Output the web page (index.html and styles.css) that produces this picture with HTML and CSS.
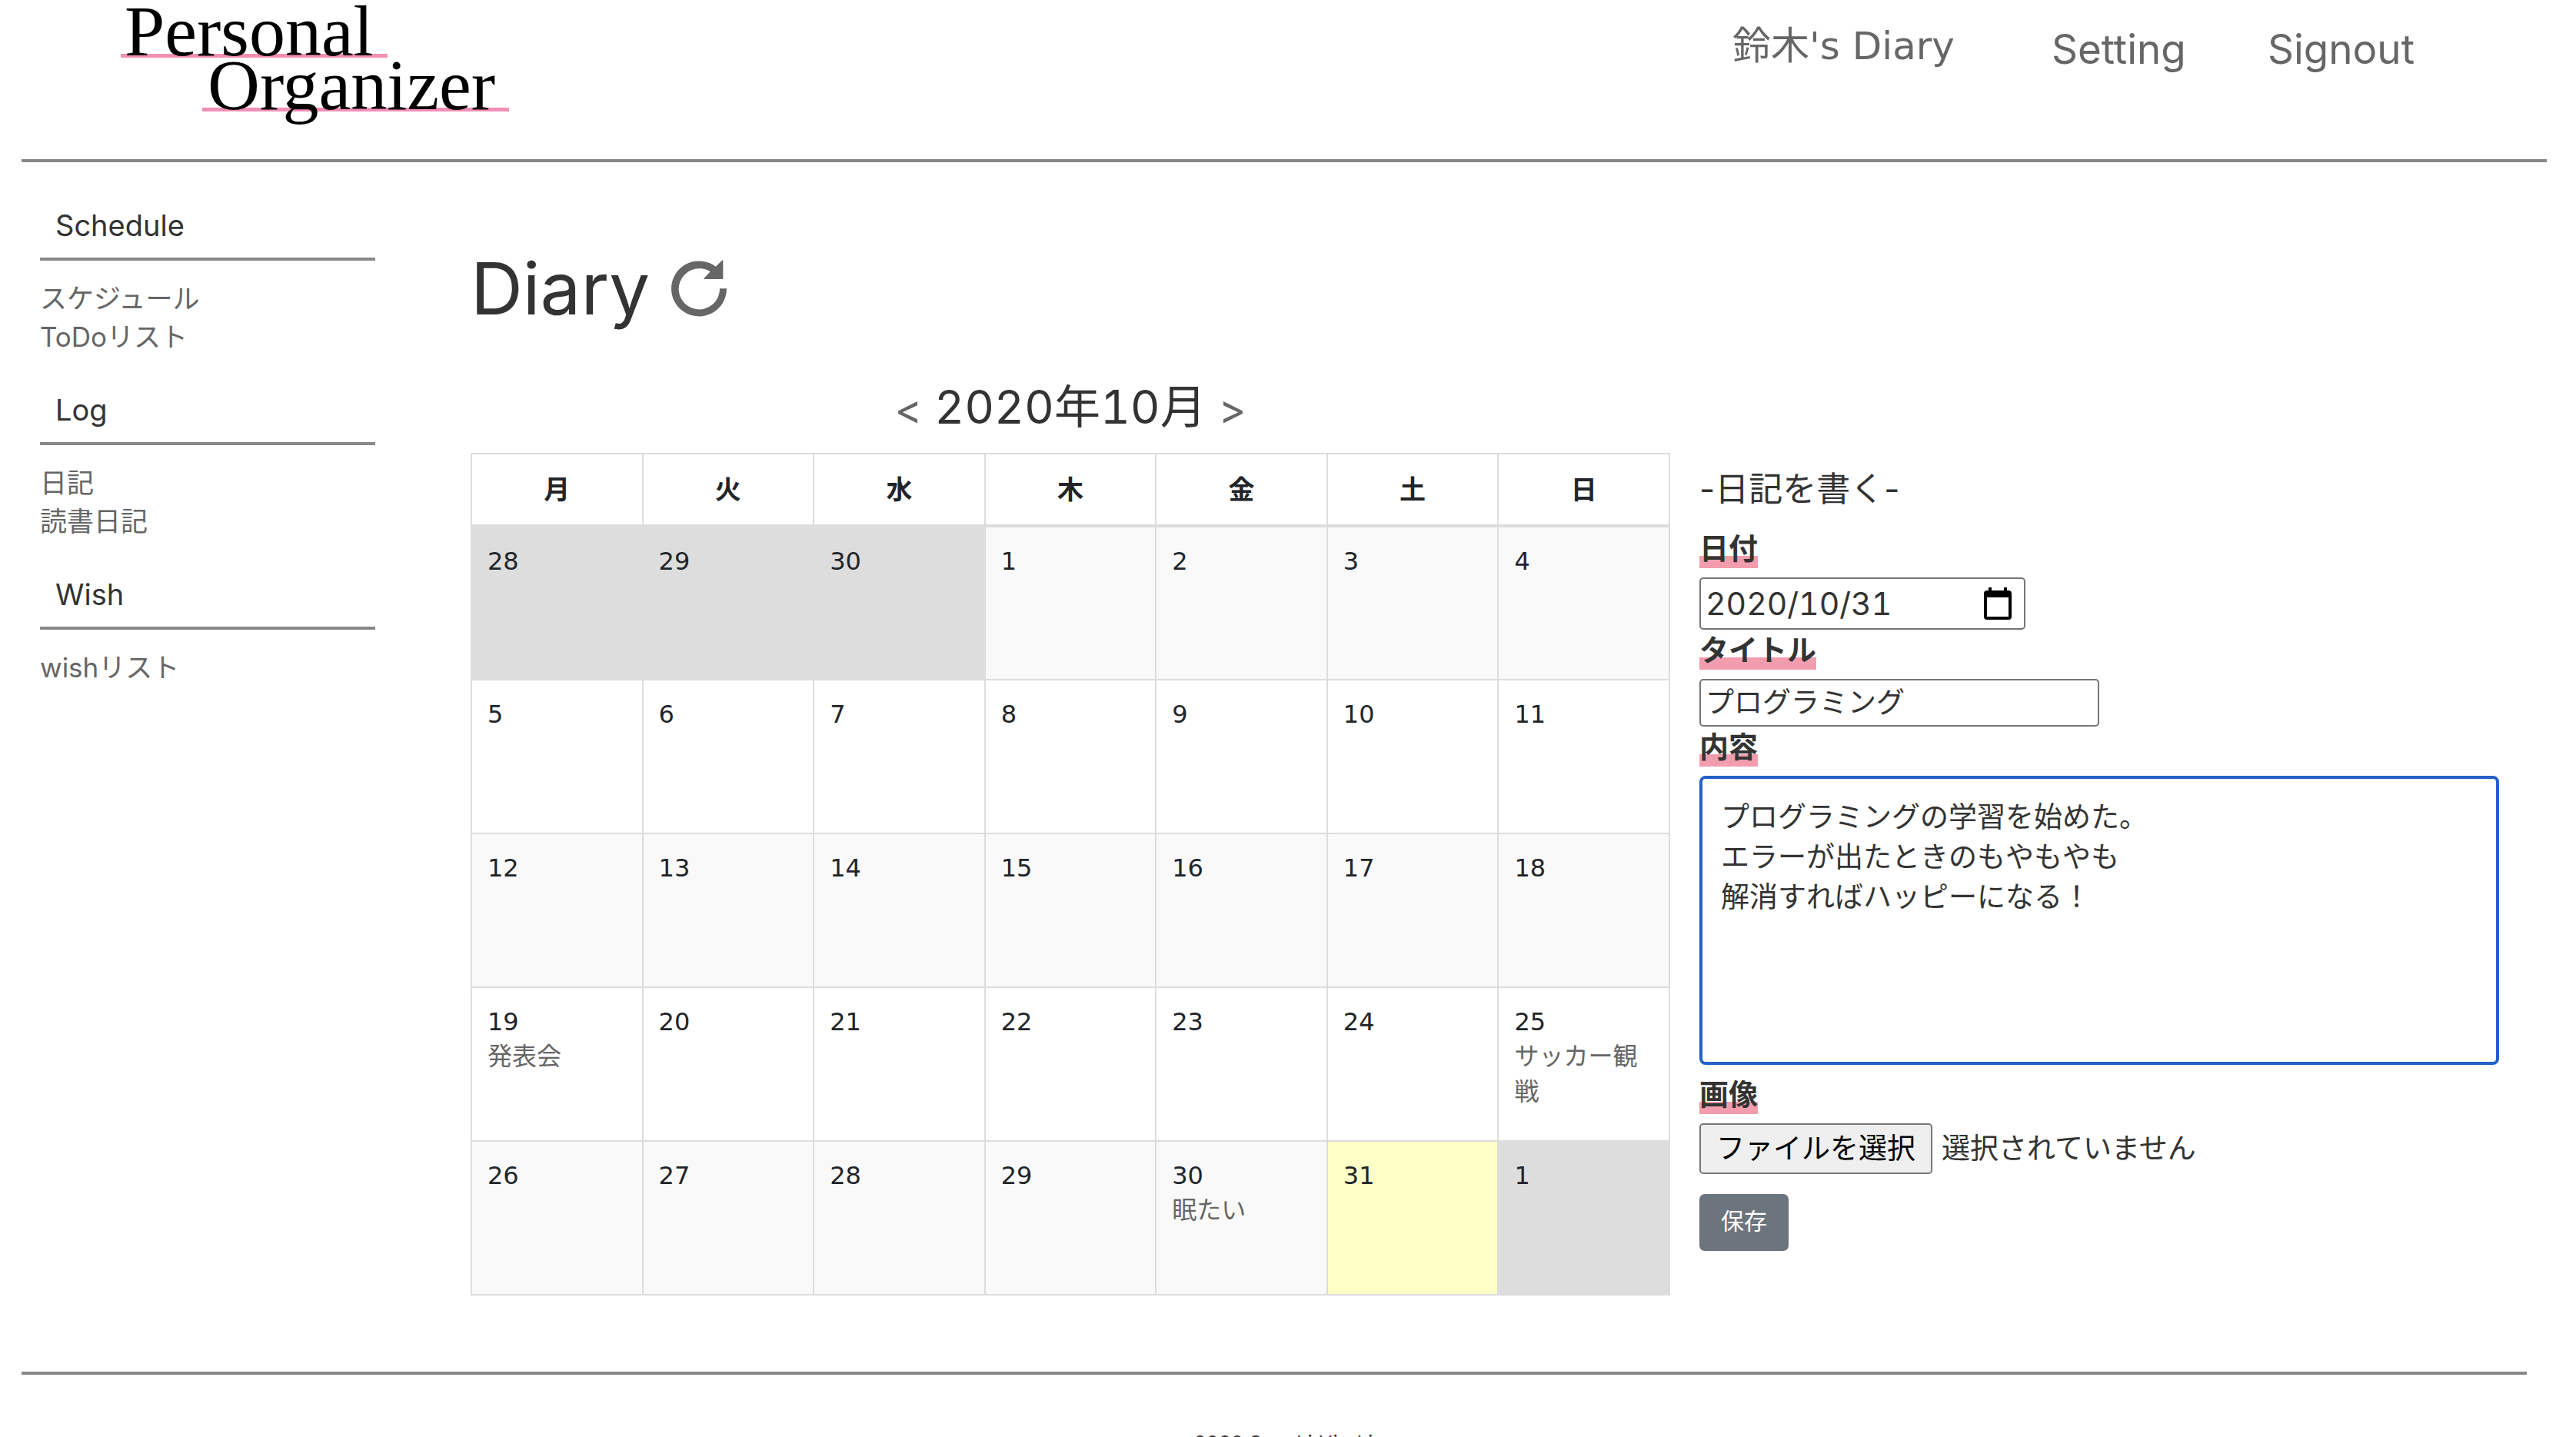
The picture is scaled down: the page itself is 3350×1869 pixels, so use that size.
FILE: index.html
```html
<!DOCTYPE html>
<html lang="ja">
<head>
<meta charset="utf-8">
<title>Personal Organizer</title>
<link rel="stylesheet" href="styles.css">
</head>
<body>
<header class="header">
  <a class="logo" href="#"><span class="logo-top">Personal</span><span class="logo-bottom">Organizer</span></a>
  <nav class="nav">
    <a class="nav-user" href="#">鈴木's Diary</a>
    <a href="#">Setting</a>
    <a href="#">Signout</a>
  </nav>
</header>

<div class="body">
  <aside class="sidebar">
    <section class="menu">
      <h2>Schedule</h2>
      <ul><li><a href="#">スケジュール</a></li><li><a href="#">ToDoリスト</a></li></ul>
    </section>
    <section class="menu">
      <h2>Log</h2>
      <ul><li><a href="#">日記</a></li><li><a href="#">読書日記</a></li></ul>
    </section>
    <section class="menu">
      <h2>Wish</h2>
      <ul><li><a href="#">wishリスト</a></li></ul>
    </section>
  </aside>

  <main class="main">
    <h1 class="title">Diary
      <a href="#" aria-label="更新"><svg class="reload" viewBox="42 53 216 222"><path d="M258 165A108 108 0 1 1 215 79L240 55Q244 52 244 57V124Q244 128 240 128H171Q166 128 170 124L194 99A80 80 0 1 0 231 165Z"/></svg></a>
    </h1>
    <div class="columns">
      <section class="calendar">
        <div class="month"><a href="#">&lt;</a><h2>2020年10月</h2><a href="#">&gt;</a></div>
        <table>
          <thead><tr><th>月</th><th>火</th><th>水</th><th>木</th><th>金</th><th>土</th><th>日</th></tr></thead>
          <tbody>
            <tr><td class="other">28</td><td class="other">29</td><td class="other">30</td><td>1</td><td>2</td><td>3</td><td>4</td></tr>
            <tr><td>5</td><td>6</td><td>7</td><td>8</td><td>9</td><td>10</td><td>11</td></tr>
            <tr><td>12</td><td>13</td><td>14</td><td>15</td><td>16</td><td>17</td><td>18</td></tr>
            <tr><td>19<a href="#">発表会</a></td><td>20</td><td>21</td><td>22</td><td>23</td><td>24</td><td>25<a href="#">サッカー観戦</a></td></tr>
            <tr><td>26</td><td>27</td><td>28</td><td>29</td><td>30<a href="#">眠たい</a></td><td class="today">31</td><td class="other">1</td></tr>
          </tbody>
        </table>
      </section>

      <form class="entry">
        <h2>-日記を書く-</h2>
        <label class="caption" for="date">日付</label>
        <div class="date-box">
          <input id="date" type="text" value="2020/10/31">
          <button type="button" aria-label="カレンダー"><svg viewBox="0 0 36 42"><path fill-rule="evenodd" d="M6 0h4v4h16V0h4v4h2a4 4 0 0 1 4 4v30a4 4 0 0 1-4 4H4a4 4 0 0 1-4-4V8a4 4 0 0 1 4-4h2zM4 13v25h28V13z"/></svg></button>
        </div>
        <label class="caption" for="subject">タイトル</label>
        <input id="subject" class="subject" type="text" value="プログラミング">
        <label class="caption" for="content">内容</label>
        <textarea id="content">プログラミングの学習を始めた。
エラーが出たときのもやもやも
解消すればハッピーになる！</textarea>
        <label class="caption caption-image" for="image">画像</label>
        <div class="file">
          <input id="image" type="file">
          <label class="file-button" for="image">ファイルを選択</label>
          <span>選択されていません</span>
        </div>
        <button class="save" type="submit">保存</button>
      </form>
    </div>
  </main>
</div>

<footer class="footer">2020 Suzuki Hiroki</footer>
</body>
</html>
```
FILE: styles.css
```css
* { box-sizing: border-box; }
body {
  margin: 0;
  background: #fff;
  color: #333;
  font-family: Inter, "Noto Sans CJK JP", sans-serif;
}
h1, h2, ul { margin: 0; padding: 0; font-weight: 400; }
ul { list-style: none; }
a { color: #666; text-decoration: none; }
input, textarea, button { font: inherit; color: inherit; margin: 0; }

.header {
  display: flex;
  justify-content: space-between;
  margin: 0 38px 0 28px;
  padding: 5px 172px 62px 129px;
  border-bottom: 4px solid #888;
}
.logo {
  color: #000;
  font: 94px/70px "Liberation Serif", serif;
}
.logo span {
  display: block;
  width: fit-content;
  padding: 0 18px 0 5px;
  background: linear-gradient(#f18fb5, #f18fb5) bottom / 100% 5px no-repeat;
}
.logo .logo-bottom { margin-left: 106px; padding-left: 7px; }
.nav {
  display: flex;
  gap: 106px;
  padding-top: 24px;
  font-size: 53px;
  line-height: 70px;
}
.nav-user {
  margin: -4px 20px 0 0;
  font-family: "DejaVu Sans", "Noto Sans CJK JP", sans-serif;
  font-size: 50px;
}

.body { display: flex; gap: 124px; padding: 0 100px 0 52px; }
.sidebar { flex: 0 0 436px; padding-top: 52px; }
.menu { margin-bottom: 40px; }
.menu h2 {
  padding: 0 20px 12px;
  border-bottom: 4px solid #888;
  font-size: 38px;
  line-height: 60px;
}
.menu ul { padding-top: 24px; font-size: 35px; line-height: 50px; }

.main { flex: 1; padding-top: 108px; }
.title {
  display: flex;
  align-items: center;
  gap: 28px;
  font-size: 94px;
  line-height: 112px;
}
.title a { display: flex; }
.reload { width: 72px; height: 74px; fill: #666; }
.columns {
  display: grid;
  grid-template-columns: 3fr 2fr;
  gap: 38px;
  padding-top: 62px;
}
.month {
  display: flex;
  justify-content: center;
  gap: 16px;
  margin-bottom: 24px;
  font-size: 54px;
  line-height: 74px;
}
.month h2 { font-size: 60px; line-height: 72px; font-variant-numeric: tabular-nums; }
.month { height: 72px; }
.month a { padding-top: 3px; }

table {
  width: 100%;
  border-collapse: collapse;
  table-layout: fixed;
  color: #212529;
  font: 32px/44px "DejaVu Sans", "Noto Sans CJK JP", sans-serif;
}
th, td { border: 2px solid #ddd; }
th { height: 94px; border-bottom-width: 4px; padding: 0; font-size: 34px; font-weight: 700; }
td { height: 200px; padding: 22px 20px 0; vertical-align: top; }
td a { display: block; line-height: 46px; }
tbody tr:nth-child(odd) { background: #f9f9f9; }
td.other { background: #ddd; }
td.today { background: #ffffc8; }

.entry {
  display: flex;
  flex-direction: column;
  align-items: flex-start;
  padding-top: 116px;
  font-size: 37px;
  line-height: 52px;
}
.entry h2 { margin-bottom: 24px; font-size: 44px; line-height: 54px; }
.caption {
  margin-bottom: 12px;
  background: linear-gradient(#f29dad, #f29dad) bottom / 100% 16px no-repeat;
  font-size: 38px;
  font-weight: 700;
}
.date-box, .subject {
  border: 2px solid #767676;
  border-radius: 5px;
  background: #fff;
}
.date-box {
  display: flex;
  align-items: center;
  width: 424px;
  height: 68px;
  padding: 0 16px 0 6px;
}
.date-box input {
  flex: 1;
  min-width: 0;
  padding: 0;
  border: 0;
  outline: 0;
  font-size: 41px;
  font-variant-numeric: tabular-nums;
}
.date-box button { display: flex; padding: 0; border: 0; background: none; }
.date-box svg { width: 36px; height: 42px; fill: #000; }
.subject { width: 50%; height: 62px; padding: 0 6px 6px; }
textarea {
  width: 100%;
  height: 376px;
  padding: 24px;
  border: 4px solid #2360c8;
  border-radius: 8px;
  outline: 0;
  resize: none;
}
.caption-image { margin-top: 12px; }
.file { display: flex; align-items: center; gap: 12px; position: relative; }
.file input { position: absolute; inset: 0; width: 302px; opacity: 0; }
.file-button {
  padding: 5px 20px;
  border: 2px solid #767676;
  border-radius: 5px;
  background: #efefef;
  color: #000;
}
.save {
  margin-top: 26px;
  padding: 8px 28px 12px;
  border: 0;
  border-radius: 7px;
  background: #6c757d;
  color: #fff;
  font-size: 30px;
  line-height: 54px;
}

.footer {
  margin: 99px 64px 0 28px;
  padding: 69px 0 0 24px;
  border-top: 4px solid #888;
  font-size: 26px;
  line-height: 40px;
  text-align: center;
}
```
